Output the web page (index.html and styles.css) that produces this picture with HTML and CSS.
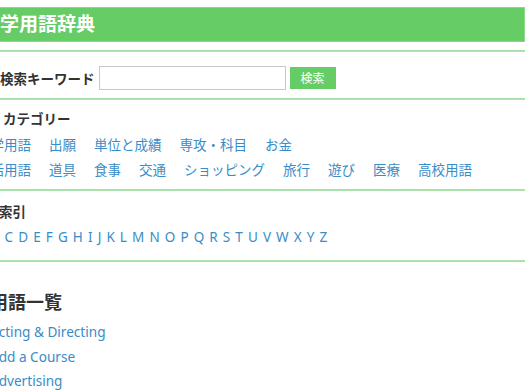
FILE: index.html
```html
<!DOCTYPE html>
<html lang="ja">
<head>
    <meta charset="UTF-8">
    <meta name="viewport" content="width=device-width, initial-scale=1.0">
    <title>大学用語辞典</title>
    <link rel="stylesheet" href="styles.css">
</head>
<body>
    <div class="page">
        <header class="site-header">
            <h1>大学用語辞典</h1>
        </header>

        <form class="search">
            <label for="keyword">検索キーワード</label>
            <input type="text" id="keyword">
            <button type="button">検索</button>
        </form>

        <section class="block cats">
            <h2>カテゴリー</h2>
            <ul class="links">
                <li><a href="#">大学用語</a></li>
                <li><a href="#">出願</a></li>
                <li><a href="#">単位と成績</a></li>
                <li><a href="#">専攻・科目</a></li>
                <li><a href="#">お金</a></li>
            </ul>
            <ul class="links">
                <li><a href="#">生活用語</a></li>
                <li><a href="#">道具</a></li>
                <li><a href="#">食事</a></li>
                <li><a href="#">交通</a></li>
                <li><a href="#">ショッピング</a></li>
                <li><a href="#">旅行</a></li>
                <li><a href="#">遊び</a></li>
                <li><a href="#">医療</a></li>
                <li><a href="#">高校用語</a></li>
            </ul>
        </section>

        <section class="block index">
            <h2>索引</h2>
            <ul class="letters"></ul>
        </section>

        <section class="block terms">
            <h2>用語一覧</h2>
            <ul class="term-list">
                <li><a href="#">Acting &amp; Directing</a></li>
                <li><a href="#">Add a Course</a></li>
                <li><a href="#">Advertising</a></li>
            </ul>
        </section>
    </div>

    <script>
        // A to Z index links
        const letters = document.querySelector('.letters');
        'ABCDEFGHIJKLMNOPQRSTUVWXYZ'.split('').forEach(ch => {
            const li = document.createElement('li');
            li.innerHTML = `<a href="#${ch}">${ch}</a>`;
            letters.appendChild(li);
        });
    </script>
</body>
</html>
```

FILE: styles.css
```css
body {
    margin: 0;
    font-family: "Noto Sans", "Noto Sans CJK JP", sans-serif;
    color: #333;
    background: #fff;
    overflow: hidden;
}

a {
    color: #3a8cc6;
    text-decoration: none;
}

ul {
    list-style: none;
    margin: 0;
    padding: 0;
}

.page {
    margin-left: -23px;
    padding-top: 7px;
}

/* green title bar */
.site-header {
    background-color: #66cc66;
    border: 1px solid #8ad88a;
    height: 33px;
}

.site-header h1 {
    margin: 0;
    padding-left: 3px;
    font-size: 19px;
    line-height: 33px;
    color: #fff;
    font-weight: bold;
}

.search {
    margin-top: 8px;
    border-top: 2px solid #a8e2a8;
    padding: 14px 0 8px 23px;
    display: flex;
    align-items: center;
    gap: 4px;
}

.search label {
    font-size: 13.5px;
    font-weight: bold;
}

.search input {
    width: 187px;
    height: 24px;
    box-sizing: border-box;
    border: 1px solid #c8c8c8;
    margin: 0;
}

.search button {
    width: 46px;
    height: 22px;
    border: none;
    background-color: #66cc66;
    color: #fff;
    font-family: inherit;
    font-size: 12px;
    margin: 0;
}

.block {
    border-top: 2px solid #a8e2a8;
}

.block h2 {
    margin: 0;
    font-size: 13.5px;
    line-height: 20px;
    font-weight: bold;
}

.cats {
    padding: 9px 0 6px;
}

.cats h2 {
    padding-left: 26px;
    margin-bottom: 4px;
}

.links {
    display: flex;
    gap: 18px;
    font-size: 13.5px;
    line-height: 25px;
}

.index {
    padding: 11px 0 10px;
}

.index h2 {
    padding-left: 22px;
    margin-bottom: 3px;
}

.letters {
    display: flex;
    gap: 5.1px;
    font-size: 13.5px;
    line-height: 25px;
}

.terms {
    padding: 27px 0 0 13px;
}

.terms h2 {
    font-size: 18px;
    line-height: 26px;
    margin-bottom: 5px;
}

.term-list {
    font-size: 13.6px;
    line-height: 24.5px;
}
```
